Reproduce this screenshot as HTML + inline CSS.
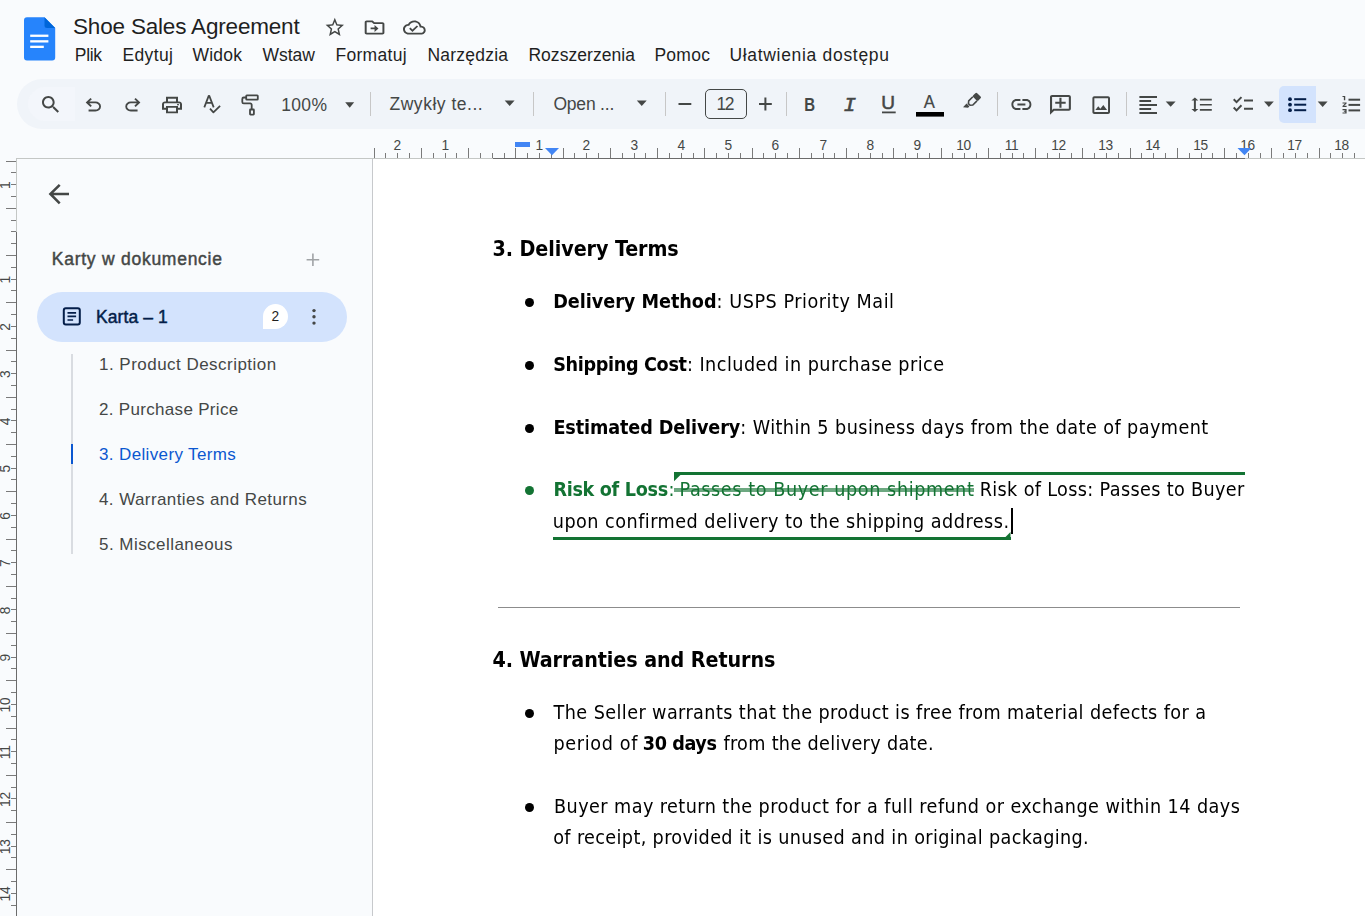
<!DOCTYPE html>
<html lang="pl"><head><meta charset="utf-8"><title>Shoe Sales Agreement</title>
<style>
html,body{margin:0;padding:0}
body{width:1365px;height:916px;overflow:hidden;position:relative;background:#f9fbfd;font-family:"Liberation Sans", sans-serif}
.t{position:absolute;white-space:nowrap;line-height:1;margin:0;padding:0}
.u{font-family:"Liberation Sans", sans-serif}
.d{font-family:"DejaVu Sans", "Liberation Sans", sans-serif;font-stretch:condensed}
.med{-webkit-text-stroke:0.45px currentColor}
.abs{position:absolute}
#toolbar{left:17px;top:79px;width:1360px;height:50px;border-radius:25px 0 0 25px;background:#f0f4f9}
#searchbg{left:28px;top:87px;width:47px;height:34px;border-radius:17px 0 0 17px;background:#f3f6fb}
#page{left:373px;top:159px;width:992px;height:760px;background:#fff}
#pageline{left:372px;top:159px;width:1px;height:760px;background:#c7c9cc}
#sidetop{left:16px;top:158px;width:357px;height:1px;background:#c4c7c5}
#sizebox{left:705px;top:89px;width:40px;height:28px;border:1px solid #444746;border-radius:5px}
.sep{position:absolute;top:92px;width:1px;height:24px;background:#c7c7c7}
#bulbtn{left:1279px;top:86px;width:37px;height:37px;background:#d3e3fd;border-radius:5px 0 0 5px}
#pill{left:37px;top:292px;width:310px;height:50px;border-radius:25px;background:#d3e3fd}
#badge{left:263px;top:304px;width:25px;height:25px;border-radius:12.500px 12.500px 12.500px 0;background:#fff}
#oline{left:71.300px;top:354px;width:1.500px;height:200px;background:#d9dce1}
#oact{left:70.700px;top:444px;width:2.500px;height:20px;background:#0b57d0}
.bul{position:absolute;width:9.200px;height:9.200px;border-radius:50%;background:#000;left:524.500px}
#hr{left:498px;top:606.500px;width:742px;height:1.300px;background:#8c8c8c}
#strike{left:674px;top:488.300px;width:299.800px;height:3.300px;background:#137333;opacity:.62}
#sugtop{left:674px;top:472px;width:570.800px;height:2.800px;background:#137333}
#sugbot{left:553px;top:537px;width:457.500px;height:2.900px;background:#137333}
#cursor{left:1011px;top:508px;width:1.700px;height:25.500px;background:#000}
#doc{position:absolute;left:0;top:0;width:1365px;height:916px;will-change:transform}
svg{position:absolute;left:0;top:0;overflow:visible}
svg text{font-family:"Liberation Sans", sans-serif}
</style></head>
<body>
<div id="toolbar" class="abs"></div>
<div id="searchbg" class="abs"></div>
<div id="bulbtn" class="abs"></div>
<div id="sizebox" class="abs"></div>
<div class="sep" style="left:370px"></div><div class="sep" style="left:533px"></div><div class="sep" style="left:665px"></div><div class="sep" style="left:786px"></div><div class="sep" style="left:997px"></div><div class="sep" style="left:1126px"></div>
<div id="page" class="abs"></div>
<div id="pageline" class="abs"></div>
<div id="sidetop" class="abs"></div>
<div id="pill" class="abs"></div>
<div id="badge" class="abs"></div>
<div id="oline" class="abs"></div>
<div id="oact" class="abs"></div>
<div class="bul" style="top:297.65px"></div><div class="bul" style="top:360.65px"></div><div class="bul" style="top:423.65px"></div><div class="bul" style="top:485.65px;background:#137333"></div><div class="bul" style="top:708.65px"></div><div class="bul" style="top:802.65px"></div>
<div id="hr" class="abs"></div>
<div id="sugtop" class="abs"></div>
<div id="sugbot" class="abs"></div>
<svg width="1365" height="916" viewBox="0 0 1365 916">
<path d="M674 472h9.500l-9.500 9.300z" fill="#137333"/>
<path d="M1010.500 539.900v-8l-8 8z" fill="#137333"/>
<rect x="373" y="158" width="120" height="1" fill="#c4c7c5"/>
<rect x="493" y="158" width="752" height="1" fill="#6b6b6b"/>
<rect x="1245" y="158" width="120" height="1" fill="#c4c7c5"/>
<rect x="374" y="148" width="1" height="10" fill="#7a7a7a"/>
<rect x="385" y="153" width="1" height="5" fill="#7a7a7a"/>
<rect x="397" y="153" width="1" height="5" fill="#7a7a7a"/>
<text x="397.40" y="150" text-anchor="middle" font-size="13.75" fill="#444746">2</text>
<rect x="409" y="153" width="1" height="5" fill="#7a7a7a"/>
<rect x="421" y="148" width="1" height="10" fill="#7a7a7a"/>
<rect x="433" y="153" width="1" height="5" fill="#7a7a7a"/>
<rect x="445" y="153" width="1" height="5" fill="#7a7a7a"/>
<text x="445.40" y="150" text-anchor="middle" font-size="13.75" fill="#444746">1</text>
<rect x="456" y="153" width="1" height="5" fill="#7a7a7a"/>
<rect x="468" y="148" width="1" height="10" fill="#7a7a7a"/>
<rect x="480" y="153" width="1" height="5" fill="#7a7a7a"/>
<rect x="492" y="153" width="1" height="5" fill="#7a7a7a"/>
<rect x="504" y="153" width="1" height="5" fill="#7a7a7a"/>
<rect x="515" y="148" width="1" height="10" fill="#7a7a7a"/>
<rect x="527" y="153" width="1" height="5" fill="#7a7a7a"/>
<rect x="539" y="153" width="1" height="5" fill="#7a7a7a"/>
<text x="539.40" y="150" text-anchor="middle" font-size="13.75" fill="#444746">1</text>
<rect x="551" y="153" width="1" height="5" fill="#7a7a7a"/>
<rect x="563" y="148" width="1" height="10" fill="#7a7a7a"/>
<rect x="574" y="153" width="1" height="5" fill="#7a7a7a"/>
<rect x="586" y="153" width="1" height="5" fill="#7a7a7a"/>
<text x="586.40" y="150" text-anchor="middle" font-size="13.75" fill="#444746">2</text>
<rect x="598" y="153" width="1" height="5" fill="#7a7a7a"/>
<rect x="610" y="148" width="1" height="10" fill="#7a7a7a"/>
<rect x="622" y="153" width="1" height="5" fill="#7a7a7a"/>
<rect x="634" y="153" width="1" height="5" fill="#7a7a7a"/>
<text x="634.40" y="150" text-anchor="middle" font-size="13.75" fill="#444746">3</text>
<rect x="645" y="153" width="1" height="5" fill="#7a7a7a"/>
<rect x="657" y="148" width="1" height="10" fill="#7a7a7a"/>
<rect x="669" y="153" width="1" height="5" fill="#7a7a7a"/>
<rect x="681" y="153" width="1" height="5" fill="#7a7a7a"/>
<text x="681.40" y="150" text-anchor="middle" font-size="13.75" fill="#444746">4</text>
<rect x="693" y="153" width="1" height="5" fill="#7a7a7a"/>
<rect x="704" y="148" width="1" height="10" fill="#7a7a7a"/>
<rect x="716" y="153" width="1" height="5" fill="#7a7a7a"/>
<rect x="728" y="153" width="1" height="5" fill="#7a7a7a"/>
<text x="728.40" y="150" text-anchor="middle" font-size="13.75" fill="#444746">5</text>
<rect x="740" y="153" width="1" height="5" fill="#7a7a7a"/>
<rect x="752" y="148" width="1" height="10" fill="#7a7a7a"/>
<rect x="763" y="153" width="1" height="5" fill="#7a7a7a"/>
<rect x="775" y="153" width="1" height="5" fill="#7a7a7a"/>
<text x="775.40" y="150" text-anchor="middle" font-size="13.75" fill="#444746">6</text>
<rect x="787" y="153" width="1" height="5" fill="#7a7a7a"/>
<rect x="799" y="148" width="1" height="10" fill="#7a7a7a"/>
<rect x="811" y="153" width="1" height="5" fill="#7a7a7a"/>
<rect x="823" y="153" width="1" height="5" fill="#7a7a7a"/>
<text x="823.40" y="150" text-anchor="middle" font-size="13.75" fill="#444746">7</text>
<rect x="834" y="153" width="1" height="5" fill="#7a7a7a"/>
<rect x="846" y="148" width="1" height="10" fill="#7a7a7a"/>
<rect x="858" y="153" width="1" height="5" fill="#7a7a7a"/>
<rect x="870" y="153" width="1" height="5" fill="#7a7a7a"/>
<text x="870.40" y="150" text-anchor="middle" font-size="13.75" fill="#444746">8</text>
<rect x="882" y="153" width="1" height="5" fill="#7a7a7a"/>
<rect x="893" y="148" width="1" height="10" fill="#7a7a7a"/>
<rect x="905" y="153" width="1" height="5" fill="#7a7a7a"/>
<rect x="917" y="153" width="1" height="5" fill="#7a7a7a"/>
<text x="917.40" y="150" text-anchor="middle" font-size="13.75" fill="#444746">9</text>
<rect x="929" y="153" width="1" height="5" fill="#7a7a7a"/>
<rect x="941" y="148" width="1" height="10" fill="#7a7a7a"/>
<rect x="952" y="153" width="1" height="5" fill="#7a7a7a"/>
<rect x="964" y="153" width="1" height="5" fill="#7a7a7a"/>
<text x="963.60" y="150" text-anchor="middle" font-size="13.75" fill="#444746" letter-spacing="-0.4">10</text>
<rect x="976" y="153" width="1" height="5" fill="#7a7a7a"/>
<rect x="988" y="148" width="1" height="10" fill="#7a7a7a"/>
<rect x="1000" y="153" width="1" height="5" fill="#7a7a7a"/>
<rect x="1012" y="153" width="1" height="5" fill="#7a7a7a"/>
<text x="1011.60" y="150" text-anchor="middle" font-size="13.75" fill="#444746" letter-spacing="-0.4">11</text>
<rect x="1023" y="153" width="1" height="5" fill="#7a7a7a"/>
<rect x="1035" y="148" width="1" height="10" fill="#7a7a7a"/>
<rect x="1047" y="153" width="1" height="5" fill="#7a7a7a"/>
<rect x="1059" y="153" width="1" height="5" fill="#7a7a7a"/>
<text x="1058.60" y="150" text-anchor="middle" font-size="13.75" fill="#444746" letter-spacing="-0.4">12</text>
<rect x="1071" y="153" width="1" height="5" fill="#7a7a7a"/>
<rect x="1082" y="148" width="1" height="10" fill="#7a7a7a"/>
<rect x="1094" y="153" width="1" height="5" fill="#7a7a7a"/>
<rect x="1106" y="153" width="1" height="5" fill="#7a7a7a"/>
<text x="1105.60" y="150" text-anchor="middle" font-size="13.75" fill="#444746" letter-spacing="-0.4">13</text>
<rect x="1118" y="153" width="1" height="5" fill="#7a7a7a"/>
<rect x="1130" y="148" width="1" height="10" fill="#7a7a7a"/>
<rect x="1141" y="153" width="1" height="5" fill="#7a7a7a"/>
<rect x="1153" y="153" width="1" height="5" fill="#7a7a7a"/>
<text x="1152.60" y="150" text-anchor="middle" font-size="13.75" fill="#444746" letter-spacing="-0.4">14</text>
<rect x="1165" y="153" width="1" height="5" fill="#7a7a7a"/>
<rect x="1177" y="148" width="1" height="10" fill="#7a7a7a"/>
<rect x="1189" y="153" width="1" height="5" fill="#7a7a7a"/>
<rect x="1201" y="153" width="1" height="5" fill="#7a7a7a"/>
<text x="1200.60" y="150" text-anchor="middle" font-size="13.75" fill="#444746" letter-spacing="-0.4">15</text>
<rect x="1212" y="153" width="1" height="5" fill="#7a7a7a"/>
<rect x="1224" y="148" width="1" height="10" fill="#7a7a7a"/>
<rect x="1236" y="153" width="1" height="5" fill="#7a7a7a"/>
<rect x="1248" y="153" width="1" height="5" fill="#7a7a7a"/>
<text x="1247.60" y="150" text-anchor="middle" font-size="13.75" fill="#444746" letter-spacing="-0.4">16</text>
<rect x="1260" y="153" width="1" height="5" fill="#7a7a7a"/>
<rect x="1271" y="148" width="1" height="10" fill="#7a7a7a"/>
<rect x="1283" y="153" width="1" height="5" fill="#7a7a7a"/>
<rect x="1295" y="153" width="1" height="5" fill="#7a7a7a"/>
<text x="1294.60" y="150" text-anchor="middle" font-size="13.75" fill="#444746" letter-spacing="-0.4">17</text>
<rect x="1307" y="153" width="1" height="5" fill="#7a7a7a"/>
<rect x="1319" y="148" width="1" height="10" fill="#7a7a7a"/>
<rect x="1330" y="153" width="1" height="5" fill="#7a7a7a"/>
<rect x="1342" y="153" width="1" height="5" fill="#7a7a7a"/>
<text x="1341.60" y="150" text-anchor="middle" font-size="13.75" fill="#444746" letter-spacing="-0.4">18</text>
<rect x="1354" y="153" width="1" height="5" fill="#7a7a7a"/>
<rect x="515" y="142" width="15" height="5" fill="#4285f4"/>
<path d="M545 148h14l-7 7.300z" fill="#4285f4"/>
<path d="M1237.500 148h14l-7 7.300z" fill="#4285f4"/>
<rect x="16" y="159" width="1" height="73" fill="#c4c7c5"/>
<rect x="16" y="232" width="1" height="684" fill="#6b6b6b"/>
<rect x="6" y="161" width="10" height="1" fill="#7a7a7a"/>
<rect x="11" y="172" width="5" height="1" fill="#7a7a7a"/>
<rect x="11" y="184" width="5" height="1" fill="#7a7a7a"/>
<text transform="translate(9.500,185.15) rotate(-90)" text-anchor="middle" font-size="13.75" fill="#444746">1</text>
<rect x="11" y="196" width="5" height="1" fill="#7a7a7a"/>
<rect x="6" y="208" width="10" height="1" fill="#7a7a7a"/>
<rect x="11" y="220" width="5" height="1" fill="#7a7a7a"/>
<rect x="11" y="231" width="5" height="1" fill="#7a7a7a"/>
<rect x="11" y="243" width="5" height="1" fill="#7a7a7a"/>
<rect x="6" y="255" width="10" height="1" fill="#7a7a7a"/>
<rect x="11" y="267" width="5" height="1" fill="#7a7a7a"/>
<rect x="11" y="279" width="5" height="1" fill="#7a7a7a"/>
<text transform="translate(9.500,279.65) rotate(-90)" text-anchor="middle" font-size="13.75" fill="#444746">1</text>
<rect x="11" y="290" width="5" height="1" fill="#7a7a7a"/>
<rect x="6" y="302" width="10" height="1" fill="#7a7a7a"/>
<rect x="11" y="314" width="5" height="1" fill="#7a7a7a"/>
<rect x="11" y="326" width="5" height="1" fill="#7a7a7a"/>
<text transform="translate(9.500,326.90) rotate(-90)" text-anchor="middle" font-size="13.75" fill="#444746">2</text>
<rect x="11" y="338" width="5" height="1" fill="#7a7a7a"/>
<rect x="6" y="350" width="10" height="1" fill="#7a7a7a"/>
<rect x="11" y="361" width="5" height="1" fill="#7a7a7a"/>
<rect x="11" y="373" width="5" height="1" fill="#7a7a7a"/>
<text transform="translate(9.500,374.15) rotate(-90)" text-anchor="middle" font-size="13.75" fill="#444746">3</text>
<rect x="11" y="385" width="5" height="1" fill="#7a7a7a"/>
<rect x="6" y="397" width="10" height="1" fill="#7a7a7a"/>
<rect x="11" y="409" width="5" height="1" fill="#7a7a7a"/>
<rect x="11" y="420" width="5" height="1" fill="#7a7a7a"/>
<text transform="translate(9.500,421.40) rotate(-90)" text-anchor="middle" font-size="13.75" fill="#444746">4</text>
<rect x="11" y="432" width="5" height="1" fill="#7a7a7a"/>
<rect x="6" y="444" width="10" height="1" fill="#7a7a7a"/>
<rect x="11" y="456" width="5" height="1" fill="#7a7a7a"/>
<rect x="11" y="468" width="5" height="1" fill="#7a7a7a"/>
<text transform="translate(9.500,468.65) rotate(-90)" text-anchor="middle" font-size="13.75" fill="#444746">5</text>
<rect x="11" y="479" width="5" height="1" fill="#7a7a7a"/>
<rect x="6" y="491" width="10" height="1" fill="#7a7a7a"/>
<rect x="11" y="503" width="5" height="1" fill="#7a7a7a"/>
<rect x="11" y="515" width="5" height="1" fill="#7a7a7a"/>
<text transform="translate(9.500,515.90) rotate(-90)" text-anchor="middle" font-size="13.75" fill="#444746">6</text>
<rect x="11" y="527" width="5" height="1" fill="#7a7a7a"/>
<rect x="6" y="539" width="10" height="1" fill="#7a7a7a"/>
<rect x="11" y="550" width="5" height="1" fill="#7a7a7a"/>
<rect x="11" y="562" width="5" height="1" fill="#7a7a7a"/>
<text transform="translate(9.500,563.15) rotate(-90)" text-anchor="middle" font-size="13.75" fill="#444746">7</text>
<rect x="11" y="574" width="5" height="1" fill="#7a7a7a"/>
<rect x="6" y="586" width="10" height="1" fill="#7a7a7a"/>
<rect x="11" y="598" width="5" height="1" fill="#7a7a7a"/>
<rect x="11" y="609" width="5" height="1" fill="#7a7a7a"/>
<text transform="translate(9.500,610.40) rotate(-90)" text-anchor="middle" font-size="13.75" fill="#444746">8</text>
<rect x="11" y="621" width="5" height="1" fill="#7a7a7a"/>
<rect x="6" y="633" width="10" height="1" fill="#7a7a7a"/>
<rect x="11" y="645" width="5" height="1" fill="#7a7a7a"/>
<rect x="11" y="657" width="5" height="1" fill="#7a7a7a"/>
<text transform="translate(9.500,657.65) rotate(-90)" text-anchor="middle" font-size="13.75" fill="#444746">9</text>
<rect x="11" y="668" width="5" height="1" fill="#7a7a7a"/>
<rect x="6" y="680" width="10" height="1" fill="#7a7a7a"/>
<rect x="11" y="692" width="5" height="1" fill="#7a7a7a"/>
<rect x="11" y="704" width="5" height="1" fill="#7a7a7a"/>
<text transform="translate(9.500,704.90) rotate(-90)" text-anchor="middle" font-size="13.75" fill="#444746">10</text>
<rect x="11" y="716" width="5" height="1" fill="#7a7a7a"/>
<rect x="6" y="728" width="10" height="1" fill="#7a7a7a"/>
<rect x="11" y="739" width="5" height="1" fill="#7a7a7a"/>
<rect x="11" y="751" width="5" height="1" fill="#7a7a7a"/>
<text transform="translate(9.500,752.15) rotate(-90)" text-anchor="middle" font-size="13.75" fill="#444746">11</text>
<rect x="11" y="763" width="5" height="1" fill="#7a7a7a"/>
<rect x="6" y="775" width="10" height="1" fill="#7a7a7a"/>
<rect x="11" y="787" width="5" height="1" fill="#7a7a7a"/>
<rect x="11" y="798" width="5" height="1" fill="#7a7a7a"/>
<text transform="translate(9.500,799.40) rotate(-90)" text-anchor="middle" font-size="13.75" fill="#444746">12</text>
<rect x="11" y="810" width="5" height="1" fill="#7a7a7a"/>
<rect x="6" y="822" width="10" height="1" fill="#7a7a7a"/>
<rect x="11" y="834" width="5" height="1" fill="#7a7a7a"/>
<rect x="11" y="846" width="5" height="1" fill="#7a7a7a"/>
<text transform="translate(9.500,846.65) rotate(-90)" text-anchor="middle" font-size="13.75" fill="#444746">13</text>
<rect x="11" y="857" width="5" height="1" fill="#7a7a7a"/>
<rect x="6" y="869" width="10" height="1" fill="#7a7a7a"/>
<rect x="11" y="881" width="5" height="1" fill="#7a7a7a"/>
<rect x="11" y="893" width="5" height="1" fill="#7a7a7a"/>
<text transform="translate(9.500,893.90) rotate(-90)" text-anchor="middle" font-size="13.75" fill="#444746">14</text>
<rect x="11" y="905" width="5" height="1" fill="#7a7a7a"/>
<g transform="translate(325.60,17.80) scale(0.9200,0.9579) translate(-2,-2)" fill="#444746"><path d="M22 9.240l-7.190-.620L12 2 9.190 8.630 2 9.240l5.460 4.730L5.820 21 12 17.270 18.180 21l-1.630-7.030L22 9.240zM12 15.400l-3.760 2.270 1-4.280-3.320-2.880 4.380-.380L12 6.100l1.710 4.040 4.380.380-3.320 2.880 1 4.280L12 15.400z"/></g><g transform="translate(364.70,20.50) scale(0.9850,0.8750) translate(-2,-4)" fill="#444746"><path d="M20 6h-8l-2-2H4c-1.100 0-2 .900-2 2v12c0 1.100.900 2 2 2h16c1.100 0 2-.900 2-2V8c0-1.100-.900-2-2-2zm0 12H4V6h5.170l2 2H20v10zm-8-1l4-4-4-4v3H8v2h4v3z"/></g><g transform="translate(403.00,20.50) scale(0.9458,0.8750) translate(0,-4)" fill="#444746"><path d="M19.350 10.040C18.670 6.590 15.640 4 12 4 9.110 4 6.600 5.640 5.350 8.040 2.340 8.360 0 10.910 0 14c0 3.310 2.690 6 6 6h13c2.760 0 5-2.240 5-5 0-2.640-2.050-4.780-4.650-4.960zM19 18H6c-2.210 0-4-1.790-4-4 0-2.050 1.530-3.760 3.560-3.970l1.070-.110.500-.950C8.080 7.140 9.940 6 12 6c2.620 0 4.880 1.860 5.390 4.430l.300 1.500 1.530.110c1.560.100 2.780 1.410 2.780 2.960 0 1.650-1.350 3-3 3zm-9-3.820l-2.090-2.090L6.500 13.500 10 17l6.010-6.010-1.410-1.410z"/></g><g transform="translate(42.00,96.00) scale(0.9720,0.9605) translate(-3,-3)" fill="#444746"><path d="M15.5 14h-.79l-.28-.27C15.41 12.59 16 11.11 16 9.5 16 5.91 13.09 3 9.5 3S3 5.91 3 9.5 5.91 16 9.5 16c1.61 0 3.09-.59 4.23-1.57l.27.28v.79l5 4.990L20.490 19l-4.990-5zm-6 0C7.010 14 5 11.990 5 9.500S7.010 5 9.500 5 14 7.010 14 9.500 11.990 14 9.500 14z"/></g><g transform="translate(85.70,98.00) scale(0.0240,0.0223) translate(-160,800)" fill="#444746"><path d="M280-200v-80h284q63 0 109.5-40T720-420q0-60-46.5-100T564-560H312l104 104-56 56-200-200 200-200 56 56-104 104h252q97 0 166.5 63T797-420q0 94-66.5 157T564-200H280Z"/></g><g transform="translate(140.40,98.00) scale(-0.0237,0.0223) translate(-160,800)" fill="#444746"><path d="M280-200v-80h284q63 0 109.5-40T720-420q0-60-46.5-100T564-560H312l104 104-56 56-200-200 200-200 56 56-104 104h252q97 0 166.5 63T797-420q0 94-66.5 157T564-200H280Z"/></g><g transform="translate(162.00,96.80) scale(1.0000,0.9167) translate(-2,-3)" fill="#444746"><path d="M19 8h-1V3H6v5H5c-1.66 0-3 1.34-3 3v6h4v4h12v-4h4v-6c0-1.660-1.340-3-3-3zM8 5h8v3H8V5zm8 12v2H8v-4h8v2zm2-2v-2H6v2H4v-4c0-.55.45-1 1-1h14c.55 0 1 .45 1 1v4h-2z"/><circle cx="18" cy="11.5" r="1"/></g><g transform="translate(345.20,102.20) scale(0.9000,1.1200) translate(-7,-10)" fill="#444746"><path d="M7 10l5 5 5-5z"/></g><g transform="translate(504.70,100.50) scale(0.9900,1.1000) translate(-7,-10)" fill="#444746"><path d="M7 10l5 5 5-5z"/></g><g transform="translate(636.80,100.50) scale(0.9900,1.1000) translate(-7,-10)" fill="#444746"><path d="M7 10l5 5 5-5z"/></g><g transform="translate(1011.40,99.00) scale(1.0000,1.1000) translate(-2,-7)" fill="#444746"><path d="M3.900 12c0-1.710 1.390-3.100 3.100-3.100h4V7H7c-2.760 0-5 2.240-5 5s2.240 5 5 5h4v-1.900H7c-1.710 0-3.100-1.390-3.100-3.100zM8 13h8v-2H8v2zm9-6h-4v1.900h4c1.710 0 3.100 1.390 3.100 3.100s-1.390 3.100-3.100 3.100h-4V17h4c2.760 0 5-2.240 5-5s-2.240-5-5-5z"/></g><g transform="translate(1070.90,94.90) scale(-1.0450,0.9900) translate(-2,-2)" fill="#444746"><path d="M22 4c0-1.100-.900-2-2-2H4c-1.100 0-2 .900-2 2v12c0 1.100.900 2 2 2h14l4 4V4zm-2 13.170L18.830 16H4V4h16v13.170zM13 5h-2v4H7v2h4v4h2v-4h4V9h-4z"/></g><g transform="translate(1092.40,96.20) scale(0.9778,0.9889) translate(-3,-3)" fill="#444746"><path d="M19 5v14H5V5h14m0-2H5c-1.100 0-2 .900-2 2v14c0 1.100.900 2 2 2h14c1.100 0 2-.900 2-2V5c0-1.100-.900-2-2-2zm-4.860 8.860l-3 3.870L9 13.140 6 17h12l-3.860-5.140z"/></g><g transform="translate(1139.40,96.00) scale(0.9778,1.0000) translate(-3,-3)" fill="#444746"><path d="M15 15H3v2h12v-2zm0-8H3v2h12V7zM3 13h18v-2H3v2zm0 8h18v-2H3v2zM3 3v2h18V3H3z"/></g><g transform="translate(1165.70,101.50) scale(0.9900,1.0400) translate(-7,-10)" fill="#444746"><path d="M7 10l5 5 5-5z"/></g><g transform="translate(1191.40,97.50) scale(0.9951,0.8529) translate(-1.5,-3.5)" fill="#444746"><path d="M6 7h2.500L5 3.500 1.500 7H4v10H1.500L5 20.500 8.500 17H6V7zm4-2v2h12V5H10zm0 14h12v-2H10v2zm0-6h12v-2H10v2z"/></g><g transform="translate(1233.00,96.40) scale(1.0000,1.0219) translate(-2,-3.93)" fill="#444746"><path d="M22 7h-9v2h9V7zm0 8h-9v2h9v-2zM5.540 11L2 7.460l1.410-1.410 2.120 2.120 4.240-4.240 1.410 1.410L5.540 11zm0 8L2 15.460l1.410-1.410 2.120 2.120 4.240-4.240 1.410 1.410L5.540 19z"/></g><g transform="translate(1264.00,101.50) scale(0.9800,1.0800) translate(-7,-10)" fill="#444746"><path d="M7 10l5 5 5-5z"/></g><g transform="translate(1317.70,101.50) scale(0.9900,1.0800) translate(-7,-10)" fill="#444746"><path d="M7 10l5 5 5-5z"/></g><g transform="translate(48.60,184.00) scale(1.2750,1.2625) translate(-4,-4)" fill="#444746"><path d="M20 11H7.830l5.590-5.590L12 4l-8 8 8 8 1.410-1.410L7.830 13H20v-2z"/></g>
<rect x="678.500" y="103" width="12.800" height="2" fill="#444746"/><rect x="759" y="103" width="12.800" height="2" fill="#444746"/><rect x="764.400" y="97.500" width="2" height="13" fill="#444746"/><text transform="translate(804.300,110.900) scale(0.790,1)" font-size="19" font-weight="700" fill="#444746">B</text><text transform="translate(843.400,110.900) scale(1.020,1)" style="font-family:'Liberation Mono',monospace" font-style="italic" font-size="20.500" fill="#444746" stroke="#444746" stroke-width="0.600">I</text><text transform="translate(881.200,109.200) scale(1.040,1)" font-size="18.300" fill="#444746" stroke="#444746" stroke-width="0.500">U</text><rect x="882" y="111.500" width="13.700" height="1.800" fill="#444746"/><text transform="translate(923.800,107.600) scale(0.950,1)" font-size="17.600" fill="#444746" stroke="#444746" stroke-width="0.200">A</text><rect x="916" y="112" width="28" height="4.6" fill="#000"/><g transform="translate(972.300,101.400) rotate(45)" fill="#444746"><rect x="-3.700" y="-9.300" width="7.400" height="5.600" rx="1.300"/><path d="M-2.900 -3.700V2.200L-1.200 4.300H1.200L2.900 2.200V-3.700" fill="none" stroke="#444746" stroke-width="1.600"/><path d="M-2.500 5.600h4v2l-4 3z"/></g><g fill="none" stroke="#444746" stroke-width="1.75" stroke-linejoin="round"><path d="M204.300 107.400L208.700 95.900H209.300L213.700 107.400M206.100 102.900H211.900"/><path d="M210 108.700L213.400 112.400L220.100 105.900"/></g><g fill="none" stroke="#444746" stroke-width="1.8" stroke-linejoin="round"><rect x="246.200" y="95.400" width="11.600" height="4.200" rx=".6"/><path d="M246.200 97.500H243.800a1.500 1.500 0 0 0-1.500 1.500V101.900a1.500 1.500 0 0 0 1.500 1.500H250.200a1.500 1.500 0 0 1 1.500 1.500V109"/><rect x="250" y="109.500" width="3.900" height="5.100" rx=".5"/></g><g fill="#041e49"><circle cx="1290" cy="99.200" r="1.900"/><circle cx="1290" cy="104.700" r="1.900"/><circle cx="1290" cy="110.200" r="1.900"/><rect x="1294.200" y="98.200" width="12" height="2"/><rect x="1294.200" y="103.700" width="12" height="2"/><rect x="1294.200" y="109.200" width="12" height="2"/></g><g fill="#444746"><rect x="1348.500" y="98.700" width="11.600" height="2"/><rect x="1348.500" y="103.900" width="11.600" height="2"/><rect x="1348.500" y="109.400" width="11.600" height="2"/></g><g transform="translate(1342.50,95.90) scale(1.3667,1.1000) translate(-2,-4)" fill="#444746"><path d="M2 17h2v.5H3v1h1v.5H2v1h3v-4H2v1zm1-9h1V4H2v1h1v3zm-1 3h1.800L2 13.100v.900h3v-1H3.200L5 10.900V10H2v1z"/></g><path d="M312.900 253.400v12.600M306.600 259.700h12.600" stroke="#a0a3a6" stroke-width="1.600" fill="none"/><g fill="none" stroke="#041e49" stroke-width="2"><rect x="63.800" y="308.300" width="16" height="16.200" rx="2"/><path d="M67.500 312.800h8.600M67.500 316.400h8.600M67.500 320h5.600" stroke-width="1.7"/></g><g fill="#444746"><circle cx="314" cy="310.600" r="1.700"/><circle cx="314" cy="316.800" r="1.700"/><circle cx="314" cy="323.100" r="1.700"/></g><g><path d="M27 17.300H44.500L55.200 28V57.400a3 3 0 0 1-3 3H27a3 3 0 0 1-3-3V20.300a3 3 0 0 1 3-3z" fill="#2684fc"/><path d="M44.500 17.300L55.200 28H47a2.500 2.500 0 0 1-2.500-2.500z" fill="#0066da"/><rect x="30.200" y="34.600" width="18.200" height="2.300" fill="#fff"/><rect x="30.200" y="40.200" width="18.200" height="2.300" fill="#fff"/><rect x="30.200" y="45.700" width="13.600" height="2.300" fill="#fff"/></g>
</svg>
<span id="t0" class="t u" style="left:73.00px;top:16.00px;font-size:22.5px;color:#1f1f1f;letter-spacing:-0.182px;">Shoe Sales Agreement</span>
<span id="t1" class="t u" style="left:74.80px;top:47.00px;font-size:17.5px;color:#1f1f1f;letter-spacing:-0.334px;">Plik</span>
<span id="t2" class="t u" style="left:122.40px;top:47.00px;font-size:17.5px;color:#1f1f1f;letter-spacing:0.392px;">Edytuj</span>
<span id="t3" class="t u" style="left:192.40px;top:47.00px;font-size:17.5px;color:#1f1f1f;letter-spacing:0.244px;">Widok</span>
<span id="t4" class="t u" style="left:262.40px;top:47.00px;font-size:17.5px;color:#1f1f1f;letter-spacing:0.025px;">Wstaw</span>
<span id="t5" class="t u" style="left:335.40px;top:47.00px;font-size:17.5px;color:#1f1f1f;letter-spacing:0.308px;">Formatuj</span>
<span id="t6" class="t u" style="left:427.40px;top:47.00px;font-size:17.5px;color:#1f1f1f;letter-spacing:0.225px;">Narzędzia</span>
<span id="t7" class="t u" style="left:528.40px;top:47.00px;font-size:17.5px;color:#1f1f1f;letter-spacing:0.052px;">Rozszerzenia</span>
<span id="t8" class="t u" style="left:654.40px;top:47.00px;font-size:17.5px;color:#1f1f1f;letter-spacing:0.283px;">Pomoc</span>
<span id="t9" class="t u" style="left:729.40px;top:47.00px;font-size:17.5px;color:#1f1f1f;letter-spacing:0.690px;">Ułatwienia dostępu</span>
<span id="t10" class="t u" style="left:281.20px;top:97.00px;font-size:17.5px;color:#444746;letter-spacing:0.345px;">100%</span>
<span id="t11" class="t u" style="left:389.50px;top:96.00px;font-size:17.5px;color:#444746;letter-spacing:0.517px;">Zwykły te...</span>
<span id="t12" class="t u" style="left:553.40px;top:96.00px;font-size:17.5px;color:#444746;letter-spacing:-0.195px;">Open ...</span>
<span id="t13" class="t u" style="left:716.60px;top:96.00px;font-size:17.5px;color:#444746;letter-spacing:-1.469px;">12</span>
<span id="t14" class="t u med" style="left:51.80px;top:250.80px;font-size:17.5px;color:#444746;letter-spacing:0.742px;">Karty w dokumencie</span>
<span id="t15" class="t u med" style="left:95.90px;top:309.00px;font-size:17.5px;color:#041e49;letter-spacing:0.109px;">Karta – 1</span>
<span id="t16" class="t u" style="left:271.40px;top:310.00px;font-size:13.75px;color:#1f1f1f;letter-spacing:0.444px;">2</span>
<span id="t17" class="t u" style="left:99.00px;top:355.80px;font-size:17.0px;color:#444746;letter-spacing:0.474px;">1. Product Description</span>
<span id="t18" class="t u" style="left:99.00px;top:400.80px;font-size:17.0px;color:#444746;letter-spacing:0.313px;">2. Purchase Price</span>
<span id="t19" class="t u" style="left:99.00px;top:445.80px;font-size:17.0px;color:#0b57d0;letter-spacing:0.363px;">3. Delivery Terms</span>
<span id="t20" class="t u" style="left:99.00px;top:490.80px;font-size:17.0px;color:#444746;letter-spacing:0.413px;">4. Warranties and Returns</span>
<span id="t21" class="t u" style="left:99.00px;top:535.80px;font-size:17.0px;color:#444746;letter-spacing:0.458px;">5. Miscellaneous</span>
<div id="doc"><span id="t22" class="t d" style="left:492.40px;top:238.00px;font-size:21.3px;color:#000000;font-weight:700;letter-spacing:-0.068px;">3. Delivery Terms</span>
<span id="t23" class="t d" style="left:553.20px;top:292.00px;font-size:19.6px;color:#000000;font-weight:700;letter-spacing:-0.019px;">Delivery Method</span>
<span id="t24" class="t d" style="left:716.60px;top:292.00px;font-size:19.6px;color:#000000;letter-spacing:0.539px;">: USPS Priority Mail</span>
<span id="t25" class="t d" style="left:553.20px;top:355.00px;font-size:19.6px;color:#000000;font-weight:700;letter-spacing:-0.337px;">Shipping Cost</span>
<span id="t26" class="t d" style="left:687.00px;top:355.00px;font-size:19.6px;color:#000000;letter-spacing:0.462px;">: Included in purchase price</span>
<span id="t27" class="t d" style="left:553.40px;top:418.00px;font-size:19.6px;color:#000000;font-weight:700;letter-spacing:-0.107px;">Estimated Delivery</span>
<span id="t28" class="t d" style="left:740.30px;top:418.00px;font-size:19.6px;color:#000000;letter-spacing:0.431px;">: Within 5 business days from the date of payment</span>
<span id="t29" class="t d" style="left:553.40px;top:480.00px;font-size:19.6px;color:#137333;font-weight:700;letter-spacing:-0.311px;">Risk of Loss</span>
<span id="t30" class="t d" style="left:668.60px;top:480.00px;font-size:19.6px;color:#137333;letter-spacing:-0.153px;">:</span>
<span id="t31" class="t d" style="left:679.60px;top:480.00px;font-size:19.6px;color:#137333;letter-spacing:0.589px;">Passes to Buyer upon shipment</span>
<span id="t32" class="t d" style="left:979.70px;top:480.00px;font-size:19.6px;color:#000000;letter-spacing:0.361px;">Risk of Loss: Passes to Buyer</span>
<span id="t33" class="t d" style="left:552.80px;top:512.00px;font-size:19.6px;color:#000000;letter-spacing:0.474px;">upon confirmed delivery to the shipping address.</span>
<span id="t34" class="t d" style="left:492.40px;top:649.00px;font-size:21.3px;color:#000000;font-weight:700;letter-spacing:-0.078px;">4. Warranties and Returns</span>
<span id="t35" class="t d" style="left:553.60px;top:703.00px;font-size:19.6px;color:#000000;letter-spacing:0.414px;">The Seller warrants that the product is free from material defects for a</span>
<span id="t36" class="t d" style="left:553.40px;top:734.00px;font-size:19.6px;color:#000000;letter-spacing:0.669px;">period of</span>
<span id="t37" class="t d" style="left:642.80px;top:734.00px;font-size:19.6px;color:#000000;font-weight:700;letter-spacing:-0.410px;">30 days</span>
<span id="t38" class="t d" style="left:723.40px;top:734.00px;font-size:19.6px;color:#000000;letter-spacing:0.335px;">from the delivery date.</span>
<span id="t39" class="t d" style="left:554.00px;top:797.00px;font-size:19.6px;color:#000000;letter-spacing:0.442px;">Buyer may return the product for a full refund or exchange within 14 days</span>
<span id="t40" class="t d" style="left:553.20px;top:828.00px;font-size:19.6px;color:#000000;letter-spacing:0.370px;">of receipt, provided it is unused and in original packaging.</span></div>
<div id="strike" class="abs"></div>
<div id="cursor" class="abs"></div>
</body></html>
